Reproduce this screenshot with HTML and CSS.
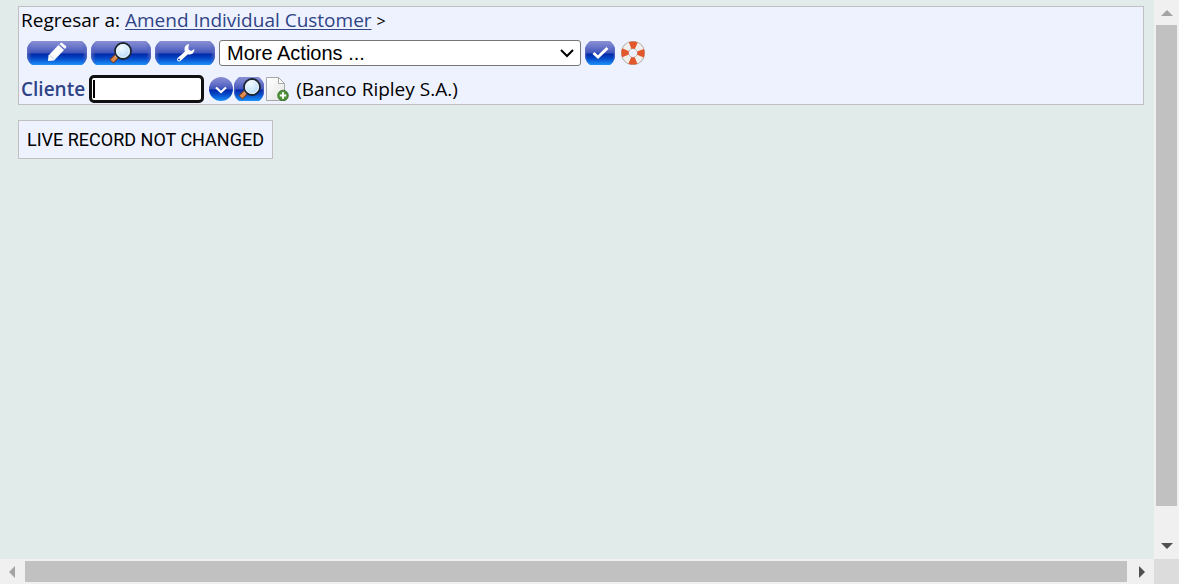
FILE: index.html
```
<!DOCTYPE html>
<html lang="es">
<head>
<meta charset="utf-8">
<meta name="viewport" content="width=device-width, initial-scale=1">
<title>Amend Individual Customer</title>
<link rel="stylesheet" href="styles.css">
</head>
<body>
<svg class="defs" aria-hidden="true">
  <defs>
    <linearGradient id="blue" x1="0" y1="0" x2="0" y2="1">
      <stop offset="0" stop-color="#8a8fd2"/>
      <stop offset=".25" stop-color="#6a76ca"/>
      <stop offset=".5" stop-color="#3f55bb"/>
      <stop offset=".54" stop-color="#0027a6"/>
      <stop offset=".72" stop-color="#0549c8"/>
      <stop offset="1" stop-color="#1c92fa"/>
    </linearGradient>
    <linearGradient id="edge" x1="0" y1="0" x2="1" y2="0">
      <stop offset="0" stop-color="#6a72bd" stop-opacity=".8"/>
      <stop offset=".08" stop-color="#4a58bd" stop-opacity="0"/>
      <stop offset=".92" stop-color="#4a58bd" stop-opacity="0"/>
      <stop offset="1" stop-color="#6a72bd" stop-opacity=".8"/>
    </linearGradient>
    <radialGradient id="glass" cx=".4" cy=".3" r=".8">
      <stop offset="0" stop-color="#f4fbff"/>
      <stop offset="1" stop-color="#a9d4f7"/>
    </radialGradient>
    <linearGradient id="paper" x1="0" y1="0" x2="1" y2="1">
      <stop offset="0" stop-color="#ffffff"/>
      <stop offset="1" stop-color="#e2e4e2"/>
    </linearGradient>
    <symbol id="pill" viewBox="0 0 60 24">
      <path d="M5 0H55Q59 3 60 8V16Q59 21 55 24H5Q1 21 0 16V8Q1 3 5 0Z" fill="url(#blue)"/>
      <path d="M5 0H55Q59 3 60 8V16Q59 21 55 24H5Q1 21 0 16V8Q1 3 5 0Z" fill="url(#edge)"/>
    </symbol>
    <symbol id="badge" viewBox="0 0 30 24">
      <path d="M5 0H25Q29 3 30 8V16Q29 21 25 24H5Q1 21 0 16V8Q1 3 5 0Z" fill="url(#blue)"/>
      <path d="M5 0H25Q29 3 30 8V16Q29 21 25 24H5Q1 21 0 16V8Q1 3 5 0Z" fill="url(#edge)"/>
    </symbol>
    <symbol id="lens" viewBox="0 0 24 24">
      <path d="M2.500 20.500 8 15" stroke="#7d3e1c" stroke-width="5.6"/>
      <path d="M3 20 7.500 15.500" stroke="#e08a4c" stroke-width="3.8"/>
      <path d="M7 16 9 14" stroke="#d8d0cc" stroke-width="3"/>
      <circle cx="14" cy="10" r="8" fill="url(#glass)" stroke="#1d2733" stroke-width="1.8"/>
      <circle cx="14" cy="10" r="6.400" fill="none" stroke="#fff" stroke-opacity=".7"/>
    </symbol>
  </defs>
</svg>
<div class="frame">
  <main class="page">
    <section class="toolbar">
      <nav class="crumbs">Regresar a: <a href="#">Amend Individual Customer</a> <span class="sep">&gt;</span></nav>
      <div class="actions">
        <button class="pill" type="button" aria-label="Edit">
          <svg viewBox="0 0 60 24"><use href="#pill" width="60" height="24"/><path d="M21 20 21.5 14.5 31.5 4 37 9 27 19.5Z" fill="#fff"/><path d="M32.5 3 34.5 1.5 39.5 5.5 38 8Z" fill="#fff"/><path d="M23 14.5 27 18.4" stroke="#a9b0df" stroke-width=".7"/></svg>
        </button>
        <button class="pill" type="button" aria-label="View">
          <svg viewBox="0 0 60 24"><use href="#pill" width="60" height="24"/><use href="#lens" x="18" y="0" width="24" height="24"/></svg>
        </button>
        <button class="pill" type="button" aria-label="Tools">
          <svg viewBox="0 0 60 24"><use href="#pill" width="60" height="24"/><path d="M24 18.5 33 10.5" stroke="#fff" stroke-width="4" stroke-linecap="round"/><path d="M34 3Q29 4 29.5 9Q30 14 35 13.5Q39 13 39.5 8L36 10 33.5 8.5 33.5 6Z" fill="#fff"/><circle cx="24" cy="18.5" r="1" fill="#1c50be"/></svg>
        </button>
        <select class="more" aria-label="More Actions">
          <option>More Actions ...</option>
        </select>
        <button class="badge" type="button" aria-label="Go">
          <svg viewBox="0 0 30 24"><use href="#badge" width="30" height="24"/><path d="M8.5 12 13 16 22.5 7" fill="none" stroke="#fff" stroke-width="3"/></svg>
        </button>
        <button class="help" type="button" aria-label="Help">
          <svg viewBox="0 0 24 24"><circle cx="12" cy="12" r="8" fill="none" stroke="#a6a19c" stroke-width="8"/><circle cx="12" cy="12" r="8" fill="none" stroke="#f1efec" stroke-width="6.6"/><circle cx="12" cy="12" r="8" fill="none" stroke="#e2572b" stroke-width="7.2" stroke-dasharray="6.28 6.286" stroke-dashoffset="3.14"/></svg>
        </button>
      </div>
      <div class="record">
        <label for="cliente">Cliente</label>
        <input id="cliente" type="text">
        <div class="tools">
          <button class="round" type="button" aria-label="List">
            <svg viewBox="0 0 24 24"><circle cx="12" cy="12" r="12" fill="url(#blue)"/><path d="M7 10.5 12 15 17 10.5" fill="none" stroke="#fff" stroke-width="2.2"/></svg>
          </button>
          <button class="badge" type="button" aria-label="Search">
            <svg viewBox="0 0 30 24"><use href="#badge" width="30" height="24"/><use href="#lens" x="4" y="0" width="24" height="24"/></svg>
          </button>
          <button class="round" type="button" aria-label="New">
            <svg viewBox="0 0 24 24"><path d="M1.5 .5H13.5L19.5 6.5V23.5H1.5Z" fill="url(#paper)" stroke="#a6a8a6"/><path d="M13.5 .5V6.5H19.5Z" fill="#fff" stroke="#a6a8a6"/><circle cx="18" cy="18.5" r="5.3" fill="#4f9139" stroke="#2f6c22" stroke-width=".8"/><path d="M18 15.3V21.7M14.8 18.5H21.2" stroke="#fff" stroke-width="2"/></svg>
          </button>
        </div>
        <span class="company">(Banco Ripley S.A.)</span>
      </div>
    </section>
    <p class="message">LIVE RECORD NOT CHANGED</p>
  </main>
  <div class="bar vertical" aria-hidden="true">
    <svg class="arrow faint" viewBox="0 0 12 6"><path d="M0 6 6 0 12 6Z"/></svg>
    <div class="track"><div class="thumb"></div></div>
    <svg class="arrow" viewBox="0 0 12 6"><path d="M0 0H12L6 6Z"/></svg>
  </div>
  <div class="bar horizontal" aria-hidden="true">
    <svg class="arrow faint" viewBox="0 0 6 12"><path d="M6 0V12L0 6Z"/></svg>
    <div class="track"><div class="thumb"></div></div>
    <svg class="arrow" viewBox="0 0 6 12"><path d="M0 0V12L6 6Z"/></svg>
  </div>
  <div class="corner"></div>
</div>
</body>
</html>
```
FILE: styles.css
```
* { box-sizing: border-box; }

body {
  margin: 0;
  background: #e1ebe9;
  color: #000;
  font: 19px/24px "Trebuchet MS", "Open Sans", sans-serif;
}

.defs { position: absolute; width: 0; height: 0; }

.frame {
  display: grid;
  grid-template: 1fr 25px / 1fr 25px;
  height: 100vh;
}

.page { padding: 6px 10px 0 18px; overflow: hidden; }

.toolbar {
  display: flex;
  flex-direction: column;
  border: 1px solid silver;
  background: #eef2ff;
  padding: 1px 2px;
}

.crumbs { white-space: nowrap; }
.crumbs a { color: #2f4486; text-underline-offset: 2px; text-decoration-thickness: 1px; }
.sep { font-size: 16px; }

.actions {
  display: flex;
  align-items: center;
  gap: 4px;
  padding: 7px 0 0 6px;
}

button { border: 0; padding: 0; background: none; cursor: pointer; }
button svg { display: block; width: 100%; height: 100%; }

.pill { width: 60px; height: 24px; }
.badge { width: 30px; height: 24px; }
.round, .help { width: 24px; height: 24px; }
.help { margin-left: 2px; }

.more {
  appearance: none;
  width: 362px;
  height: 26px;
  border: 1px solid #767676;
  border-radius: 3px;
  background: #fff url("data:image/svg+xml,%3Csvg xmlns='http://www.w3.org/2000/svg' width='14' height='10'%3E%3Cpath d='M1 2 7 8 13 2' fill='none' stroke='%23000' stroke-width='2'/%3E%3C/svg%3E") right 6px center no-repeat;
  color: #000;
  padding: 0 7px;
  font: 20px "Liberation Sans", Arial, sans-serif;
}

.record {
  display: flex;
  align-items: center;
  gap: 4px;
  padding-top: 9px;
}

.record label { color: #2f4486; font-weight: 600; }

.record input {
  width: 115px;
  height: 28px;
  border: 3px solid #101010;
  border-radius: 5px;
  outline: 0;
  background: linear-gradient(#000, #000) 1px 2px / 2px 18px no-repeat #fff;
  padding: 0 4px;
  font: 18px "Liberation Sans", Arial, sans-serif;
}

.tools { display: flex; gap: 1px; padding: 0 3px 0 1px; }

.message {
  width: fit-content;
  margin: 15px 0 0;
  border: 1px solid silver;
  background: #eef2ff;
  padding: 7px 8px;
  font-family: "Trebuchet MS", Roboto, sans-serif;
  font-size: 18px;
  line-height: 23px;
}

.bar { display: flex; align-items: center; background: #f0f0f0; }
.vertical { flex-direction: column; padding: 10px 0; }
.horizontal { padding: 0 9px; }
.track { flex: 1; display: flex; }
.thumb { background: #c1c1c1; }
.vertical .track { flex-direction: column; width: 21px; margin: 9px 0 6px; }
.vertical .thumb { height: 94%; }
.horizontal .track { height: 21px; margin: 0 12px 0 10px; }
.horizontal .thumb { width: 100%; }
.arrow { width: 12px; height: 6px; fill: #505050; }
.horizontal .arrow { width: 6px; height: 12px; }
.arrow.faint { fill: #a3a3a3; }
.corner { background: #dcdcdc; }
```
